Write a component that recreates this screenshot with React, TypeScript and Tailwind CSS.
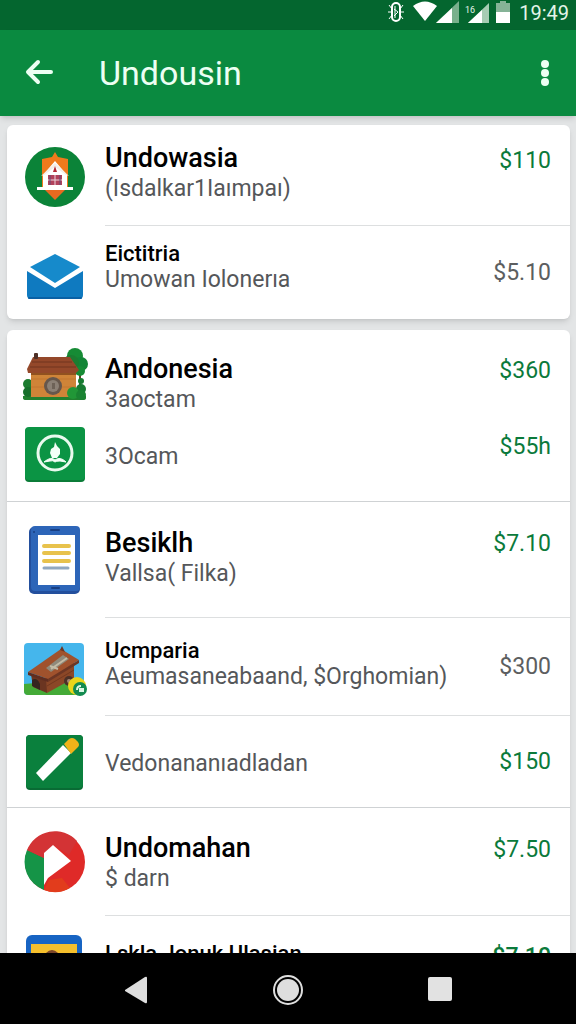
import React from "react";

type Row = {
  id: string;
  icon: React.ReactNode;
  title?: string;
  titleClass?: string;
  subtitle?: string;
  subtitleClass?: string;
  amount: string;
  amountClass: string;
  rowClass: string;
  textClass: string;
  divider?: "inset" | "full";
};

const TITLE = "text-[27px] leading-[32px] font-medium text-black";
const TITLE_SMALL = "text-[22px] leading-[26px] font-medium text-black";
const SUB = "text-[23px] leading-[30px] text-[#55575a]";
const SUB_SMALL = "text-[23px] leading-[26px] text-[#55575a]";
const GREEN = "text-[#0b7a3b]";
const GRAY = "text-[#5c5e60]";

const TempleIcon = () => (
  <svg viewBox="0 0 64 64" className="w-16 h-16" aria-hidden="true">
    <circle cx="32" cy="33" r="30" fill="#0b8338" />
    <path d="M32 8l3 5 10 2v30H19V15l10-2z" fill="#ef7a1c" />
    <path d="M19 43h26l-6 6-7 7-7-7z" fill="#e86a20" />
    <path d="M32 17l12 14v14H20V31z" fill="#fff" />
    <path d="M32 19l14 13-3-1-11-8-11 8-3 1z" fill="#f3eee9" />
    <path d="M32 22l2 6h-4z" fill="#b52a35" />
    <rect x="25" y="31" width="14" height="10" fill="#b1425c" />
    <path d="M32 31v10M25 36h14" stroke="#ead5dc" strokeWidth="1" />
    <path d="M27 31v10M37 31v10" stroke="#634b78" strokeWidth="1" />
    <rect x="14" y="43" width="36" height="3" fill="#fff" />
  </svg>
);

const MailIcon = () => (
  <svg viewBox="0 0 64 64" className="w-16 h-16" aria-hidden="true">
    <path d="M32 13l25 13-25 16L7 26z" fill="#168acb" />
    <path d="M4 30l28 17 28-17v24q0 4-4 4H8q-4 0-4-4z" fill="#0f7ac0" />
    <path d="M6 57h52" stroke="#0960a5" strokeWidth="2" strokeLinecap="round" />
  </svg>
);

const HouseIcon = () => (
  <svg viewBox="0 0 66 64" className="w-[66px] h-16" aria-hidden="true">
    <g transform="translate(0 3)">
      <path d="M57 20v30" stroke="#5f4123" strokeWidth="2" />
      <circle cx="52" cy="12" r="8" fill="#168b35" />
      <circle cx="58" cy="20" r="7" fill="#128536" />
      <circle cx="48" cy="19" r="8" fill="#1b7d31" />
      <circle cx="57" cy="27" r="5" fill="#168b35" />
      <path d="M0 52q30-5 63 0v2q0 2-3 2H3q-3 0-3-2z" fill="#22802f" />
      <circle cx="5" cy="40" r="5" fill="#1c7c2f" />
      <circle cx="5" cy="48" r="5" fill="#176f2b" />
      <path d="M8 27h45v26H8z" fill="#cf8438" />
      <path d="M8 27h45v4H8z" fill="#91511f" />
      <path d="M8 35h45M8 43h45" stroke="#c27730" strokeWidth="1" />
      <path d="M10 13h37l9 13-3 3H5l-1-4z" fill="#94482a" />
      <path d="M9 18h40M7 23h46" stroke="#71341f" strokeWidth="1" />
      <rect x="11" y="9" width="4" height="6" rx="1" fill="#4e3027" />
      <circle cx="30" cy="42" r="9" fill="#66574c" />
      <circle cx="30" cy="42" r="6" fill="#8b8075" />
      <path d="M29 39h3v6h-3z" fill="#6d6257" />
      <circle cx="58" cy="37" r="3" fill="#177b31" />
      <circle cx="58" cy="45" r="5" fill="#177b31" />
      <circle cx="50" cy="49" r="6" fill="#219737" />
      <circle cx="58" cy="51" r="5" fill="#1a8332" />
    </g>
  </svg>
);

const PlantIcon = () => (
  <svg viewBox="0 4 64 64" className="w-16 h-16" aria-hidden="true">
    <rect x="2" y="5" width="60" height="54" rx="4" fill="#0b7c38" />
    <rect x="2" y="4" width="60" height="53" rx="4" fill="#0b9444" />
    <circle cx="32" cy="30" r="17" fill="none" stroke="#e9faee" strokeWidth="3" />
    <path d="M32 19l2 4 3 3v5l-3 4h-5l-2-5 1-4 3-2z" fill="#f4fff7" />
    <path d="M21 39q7-6 11-2 5-4 11 2l-6-1q-4 0-5 1-2-2-5-1z" fill="#f4fff7" stroke="#f4fff7" />
  </svg>
);

const TabletIcon = () => (
  <svg viewBox="0 0 64 72" className="w-16 h-[72px]" aria-hidden="true">
    <rect x="6" y="3" width="51" height="67" rx="5" fill="#234f9d" />
    <rect x="8" y="2" width="49" height="65" rx="4" fill="#2d65b8" />
    <rect x="15" y="11" width="37" height="50" fill="#fff" />
    <path d="M21 22h25M21 29h25M21 37h25" stroke="#e8c24c" strokeWidth="4" strokeLinecap="round" />
    <path d="M21 44h24" stroke="#91a8c0" strokeWidth="3" strokeLinecap="round" />
    <path d="M28 6h8M29 64h7" stroke="#183f83" strokeWidth="2" strokeLinecap="round" />
    <circle cx="11" cy="8" r="1" fill="#183f83" />
  </svg>
);

const CartIcon = () => (
  <svg viewBox="0 0 66 64" className="w-[66px] h-16" aria-hidden="true">
    <rect x="1" y="8" width="60" height="52" rx="4" fill="#45b6ec" />
    <path d="M1 49q28-3 60 1v6q0 4-4 4H5q-4 0-4-4z" fill="#44aa37" />
    <path d="M8 39l16 5v14l-14-6z" fill="#6b3521" />
    <path d="M23 43l28-17v17L24 58z" fill="#8b4727" />
    <path d="M24 51l27-16" stroke="#74381f" strokeWidth="1" />
    <path d="M5 37L38 14l18 11-31 19z" fill="#a0522d" />
    <path d="M5 37l20 7v3L5 40z" fill="#5f2d20" />
    <path d="M25 44l31-19v3L25 47z" fill="#6d3624" />
    <path d="M23 33l17-13 6 4-18 13z" fill="#8f8a7b" />
    <path d="M28 34l16-11M27 31l8 3" stroke="#c4bca6" strokeWidth="2" />
    <path d="M37 15l2-4 3 6z" fill="#6d3624" />
    <path d="M9 45q5-3 8 4v6l-8-4z" fill="#35251f" />
    <circle cx="46" cy="46" r="5" fill="#4b3027" />
    <circle cx="46" cy="46" r="2" fill="#a58773" />
    <circle cx="54" cy="51" r="9" fill="#e9d51b" />
    <circle cx="57" cy="54" r="7" fill="#138b50" />
    <path d="M54 55q0-4 4-4M57 54h3v2h-3z" fill="none" stroke="#dcf7e5" strokeWidth="2" />
  </svg>
);

const PencilIcon = () => (
  <svg viewBox="0 0 64 64" className="w-16 h-16" aria-hidden="true">
    <rect x="3" y="5" width="57" height="55" rx="4" fill="#096b34" />
    <rect x="3" y="5" width="57" height="53" rx="4" fill="#0a803d" />
    <path d="M13 43L40 15l8 8-28 28z" fill="#fff" />
    <path d="M41 14l5-5q3-2 6 0l3 3q2 3 0 5l-7 7z" fill="#efb319" />
  </svg>
);

const PlayIcon = () => (
  <svg viewBox="0 0 64 64" className="w-16 h-16" aria-hidden="true">
    <circle cx="32" cy="32" r="30" fill="#df2a28" />
    <path d="M21 28L4 20a30 30 0 0 0 17 40z" fill="#159447" />
    <path d="M4 20A30 30 0 0 1 54 11L46 25 30 15l-9 13z" fill="#d33335" />
    <path d="M21 60l5-10 13-2 8 10a30 30 0 0 1-26 2z" fill="#e23c1c" />
    <path d="M21 23l9-8 18 16-23 17-4 7z" fill="#fff" />
  </svg>
);

const PhotoIcon = () => (
  <svg viewBox="0 0 64 64" className="w-16 h-16" aria-hidden="true">
    <rect x="3" y="0" width="56" height="62" rx="6" fill="#1764c3" />
    <rect x="8" y="9" width="46" height="46" fill="#f5bf2c" />
    <path d="M22 19q7-8 14 0v14H22z" fill="#7b4529" />
    <circle cx="29" cy="25" r="6" fill="#c78457" />
  </svg>
);

const FIRST: Row[] = [
  {
    id: "undowasia",
    icon: <TempleIcon />,
    title: "Undowasia",
    subtitle: "(Isdalkar1Iaımpaı)",
    amount: "$110",
    amountClass: `pt-[21px] ${GREEN}`,
    rowClass: "h-[101px]",
    textClass: "pt-[17px]",
    divider: "inset",
  },
  {
    id: "eictitria",
    icon: <MailIcon />,
    title: "Eictitria",
    titleClass: TITLE_SMALL,
    subtitle: "Umowan Iolonerıa",
    subtitleClass: SUB_SMALL,
    amount: "$5.10",
    amountClass: `self-center ${GRAY}`,
    rowClass: "h-[93px]",
    textClass: "pt-[15px]",
  },
];

const SECOND: Row[] = [
  {
    id: "andonesia",
    icon: <HouseIcon />,
    title: "Andonesia",
    subtitle: "3aoctam",
    amount: "$360",
    amountClass: `pt-[26px] ${GREEN}`,
    rowClass: "h-[86px]",
    textClass: "pt-[23px]",
  },
  {
    id: "socam",
    icon: <PlantIcon />,
    subtitle: "3Ocam",
    amount: "$55h",
    amountClass: `pt-[16px] ${GREEN}`,
    rowClass: "h-[86px]",
    textClass: "pt-[26px]",
    divider: "full",
  },
  {
    id: "besiklh",
    icon: <TabletIcon />,
    title: "Besiklh",
    subtitle: "Vallsa( Filka)",
    amount: "$7.10",
    amountClass: `pt-[27px] ${GREEN}`,
    rowClass: "h-[116px]",
    textClass: "pt-[25px]",
    divider: "inset",
  },
  {
    id: "ucmparia",
    icon: <CartIcon />,
    title: "Ucmparia",
    titleClass: TITLE_SMALL,
    subtitle: "Aeumasaneabaand, $Orghomian)",
    subtitleClass: SUB_SMALL,
    amount: "$300",
    amountClass: `self-center ${GRAY}`,
    rowClass: "h-[98px]",
    textClass: "pt-[20px]",
    divider: "inset",
  },
  {
    id: "vedonan",
    icon: <PencilIcon />,
    subtitle: "Vedonananıadladan",
    amount: "$150",
    amountClass: `self-center ${GREEN}`,
    rowClass: "h-[92px]",
    textClass: "pt-[33px]",
    divider: "full",
  },
  {
    id: "undomahan",
    icon: <PlayIcon />,
    title: "Undomahan",
    subtitle: "$ darn",
    amount: "$7.50",
    amountClass: `pt-[27px] ${GREEN}`,
    rowClass: "h-[108px]",
    textClass: "pt-[24px]",
    divider: "inset",
  },
  {
    id: "lskla",
    icon: <PhotoIcon />,
    title: "Lskla Jonuk Ulasian",
    titleClass: TITLE_SMALL,
    amount: "$7.10",
    amountClass: `pt-[26px] font-medium ${GREEN}`,
    rowClass: "h-[102px]",
    textClass: "pt-[25px]",
  },
];

const ListRow = ({ row }: { row: Row }) => (
  <li className={`flex pl-4 ${row.rowClass} ${row.divider === "full" ? "border-b border-[#cfd2d4]" : ""}`}>
    <div className="w-[66px] shrink-0 self-center">{row.icon}</div>
    <div
      className={`ml-4 flex min-w-0 flex-1 pr-[19px] ${
        row.divider === "inset" ? "border-b border-[#dddfe0]" : ""
      }`}
    >
      <div className={`min-w-0 flex-1 whitespace-nowrap ${row.textClass}`}>
        {row.title && <h2 className={row.titleClass ?? TITLE}>{row.title}</h2>}
        {row.subtitle && <p className={row.subtitleClass ?? SUB}>{row.subtitle}</p>}
      </div>
      <span className={`shrink-0 text-[23px] leading-[30px] ${row.amountClass}`}>{row.amount}</span>
    </div>
  </li>
);

const StatusBar = () => (
  <div className="flex h-[30px] shrink-0 items-start justify-end bg-[#04662f] pr-[7px] text-white">
    <svg viewBox="0 0 124 26" className="mr-[9px] h-[26px] w-[124px]" aria-hidden="true">
      <g fill="none" stroke="#fff">
        <rect x="6" y="3" width="8" height="18" rx="4" strokeWidth="2" />
        <path d="M3 5l3 4M3 19l3-4M17 5l-3 4M17 19l-3-4M2 12h4M14 12h4M9 6v12M8 9l4 3-4 4" strokeWidth="1" />
      </g>
      <path d="M27 6q12-9 24 0L39 21z" fill="#fff" />
      <path d="M50 23L73 1v22z" fill="#79b08c" />
      <path d="M50 23L66 8v15z" fill="#fff" />
      <path d="M82 23L103 3v20z" fill="#a7ccb3" />
      <path d="M82 23L96 10v13z" fill="#fff" />
      <text x="79" y="13" fill="#e3f5e9" fontSize="9" fontFamily="Roboto, sans-serif">
        16
      </text>
      <path d="M110 3h4V1h6v2h4v9h-14z" fill="#86b397" />
      <path d="M110 12h14v11h-14z" fill="#fff" />
    </svg>
    <span className="text-[20px] leading-[26px] text-[#e3f5e9]">19:49</span>
  </div>
);

const NavBar = () => (
  <nav className="flex h-[71px] shrink-0 items-center justify-center gap-[104px] bg-black">
    <button type="button" aria-label="Back" className="flex size-12 items-center justify-center">
      <svg viewBox="0 0 28 30" className="h-[30px] w-7" aria-hidden="true">
        <path d="M3 16L23 3q2-1 2 1v24q0 2-2 1L3 17z" fill="#dedede" />
      </svg>
    </button>
    <button type="button" aria-label="Home" className="flex size-12 items-center justify-center">
      <svg viewBox="0 0 32 32" className="size-8" aria-hidden="true">
        <circle cx="16" cy="17" r="14" fill="none" stroke="#dedede" strokeWidth="2" />
        <circle cx="16" cy="17" r="11" fill="#dedede" />
      </svg>
    </button>
    <button type="button" aria-label="Recent apps" className="flex size-12 items-center justify-center">
      <span className="size-6 rounded-xs bg-[#e2e2e2]" />
    </button>
  </nav>
);

const App = () => {
  return (
    <div className="flex h-screen flex-col overflow-hidden bg-[#e3e5e6] font-[Roboto,sans-serif]">
      <StatusBar />
      <header className="z-10 flex h-[86px] shrink-0 items-center bg-[#0a8a40] pl-[23px] pr-[14px] text-[#ecfff3] shadow-md">
        <button type="button" aria-label="Go back" className="size-8">
          <svg viewBox="0 0 32 32" className="size-8" aria-hidden="true">
            <path
              d="M28 15H6M15 5L5 15l10 10"
              fill="none"
              stroke="currentColor"
              strokeWidth="4"
              strokeLinecap="round"
              strokeLinejoin="round"
            />
          </svg>
        </button>
        <h1 className="ml-11 flex-1 text-[34px] leading-[40px]">Undousin</h1>
        <button type="button" aria-label="More options" className="flex h-8 w-[34px] items-center justify-center">
          <svg viewBox="0 0 8 28" className="h-7 w-2" aria-hidden="true">
            <circle cx="4" cy="5" r="4" fill="currentColor" />
            <circle cx="4" cy="14" r="4" fill="currentColor" />
            <circle cx="4" cy="23" r="4" fill="currentColor" />
          </svg>
        </button>
      </header>

      <main className="flex min-h-0 flex-1 flex-col gap-[11px] overflow-hidden pt-[9px] pr-[6px] pl-[7px]">
        <ul className="shrink-0 rounded-md bg-white shadow-md">
          {FIRST.map((row) => (
            <ListRow key={row.id} row={row} />
          ))}
        </ul>
        <ul className="shrink-0 rounded-md bg-white shadow-md">
          {SECOND.map((row) => (
            <ListRow key={row.id} row={row} />
          ))}
        </ul>
      </main>

      <NavBar />
    </div>
  );
};

export default App;
